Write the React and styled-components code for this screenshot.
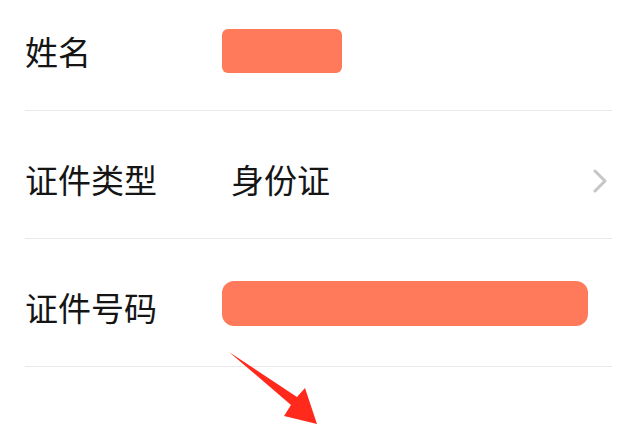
import React from "react";
import styled, { createGlobalStyle } from "styled-components";

const GlobalStyle = createGlobalStyle`
  html, body {
    margin: 0;
    padding: 0;
    background: #ffffff;
  }
  body {
    width: 640px;
    height: 427px;
    overflow: hidden;
    font-family: "Noto Sans CJK SC", "Noto Sans", sans-serif;
  }
`;

const Page = styled.div`
  position: relative;
  width: 640px;
  height: 427px;
  overflow: hidden;
  background: #ffffff;
`;

const List = styled.div`
  margin-top: -17px;
  display: flex;
  flex-direction: column;
`;

const Row = styled.div`
  height: 127px;
  margin: 0 28px 0 25px;
  display: flex;
  align-items: center;
  border-bottom: 1px solid #e9e9e9;
  box-sizing: content-box;
`;

const Label = styled.div`
  width: 197px;
  flex-shrink: 0;
  font-size: 33px;
  line-height: 1;
  color: #151515;
  padding-top: ${(p) => p.$shift || 9}px;
`;

const Value = styled.div`
  flex: 1;
  display: flex;
  align-items: center;
  justify-content: space-between;
  padding-top: ${(p) => p.$shift || 0}px;
`;

const ValueText = styled.span`
  font-size: 33px;
  line-height: 1;
  color: #151515;
  padding-left: 9px;
  padding-top: 9px;
`;

const Mask = styled.div`
  width: ${(p) => p.$w}px;
  height: ${(p) => p.$h}px;
  border-radius: ${(p) => p.$r}px;
  background: #ff7a5b;
`;

const Chevron = styled.svg`
  width: 16px;
  height: 24px;
  margin-right: 4px;
  margin-top: 13px;
`;

const Arrow = styled.svg`
  position: absolute;
  left: 0;
  top: 0;
  width: 640px;
  height: 427px;
  pointer-events: none;
`;

export default function App() {
  return (
    <>
      <GlobalStyle />
      <Page>
        <List>
          <Row>
            <Label>姓名</Label>
            <Value $shift={9}>
              <Mask $w={120} $h={44} $r={6} />
            </Value>
          </Row>
          <Row>
            <Label>证件类型</Label>
            <Value>
              <ValueText>身份证</ValueText>
              <Chevron viewBox="0 0 16 24">
                <path
                  d="M3 2 L13 12 L3 22"
                  fill="none"
                  stroke="#c6c6c6"
                  strokeWidth="3"
                  strokeLinecap="round"
                  strokeLinejoin="round"
                />
              </Chevron>
            </Value>
          </Row>
          <Row>
            <Label>证件号码</Label>
            <Value $shift={2}>
              <Mask $w={366} $h={45} $r={12} />
            </Value>
          </Row>
        </List>
        <Arrow viewBox="0 0 640 427">
          <polygon
            points="229,352 297,397 305,388 317,424 284,416 291,405"
            fill="#ff2a1c"
          />
        </Arrow>
      </Page>
    </>
  );
}
